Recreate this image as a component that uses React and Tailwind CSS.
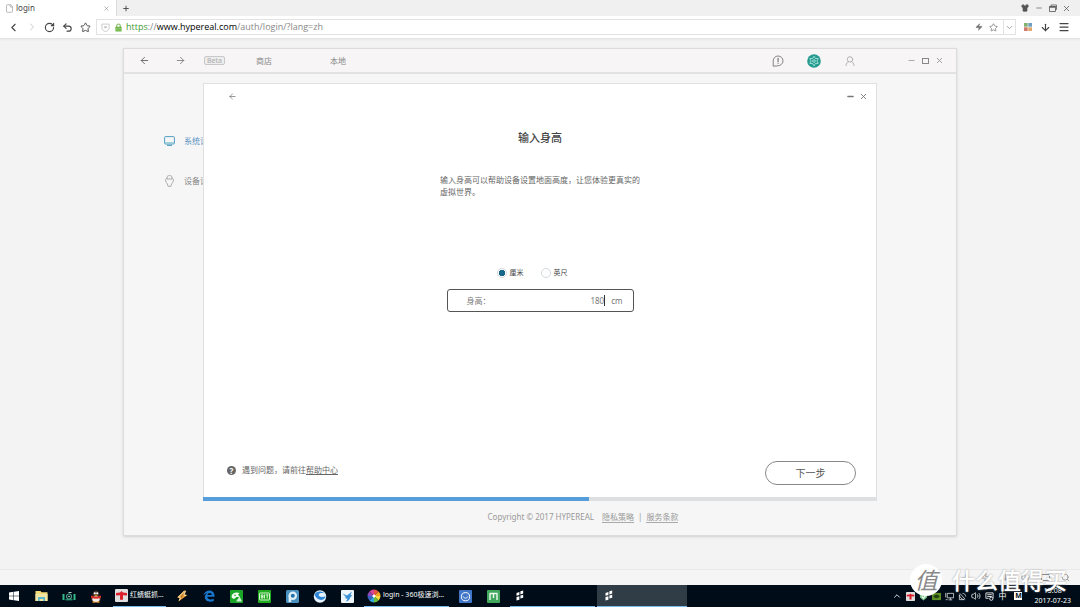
import { useState } from 'react';
import {
    ArrowDown,
    ArrowLeft,
    ArrowRight,
    ChevronDown,
    ChevronLeft,
    ChevronRight,
    ChevronUp,
    File,
    Menu,
    Minus,
    Plus,
    RotateCw,
    Search,
    Shirt,
    Star,
    Undo2,
    Volume2,
    X,
    Zap,
} from 'lucide-react';

const HEIGHT_PROGRESS = 57.2;

function IconButton({ label, className = '', children }) {
    return (
        <button type="button" aria-label={label} className={`flex shrink-0 items-center justify-center ${className}`}>
            {children}
        </button>
    );
}

/* ---------- Browser ---------- */

function RestoreIcon() {
    return (
        <svg viewBox="0 0 8 8" className="size-2" fill="none" stroke="#555" strokeWidth="0.8">
            <path d="M2 2V1h5.5v4.5h-1" />
            <path d="M0.5 2.5h6v5h-6z" />
            <path d="M0.5 3h6" strokeWidth="1.4" />
        </svg>
    );
}

function TabStrip() {
    return (
        <div className="flex h-4 items-center bg-[#f0f0f0] text-[#555]">
            <div className="flex h-4 w-[117px] items-center border-r border-[#dcdcdc] bg-white pr-[6px] pl-[5px]">
                <File className="size-[9px] text-[#999]" strokeWidth={1.8} />
                <span className="ml-[2px] flex-1 text-[8px] leading-4 text-[#444]">login</span>
                <IconButton label="关闭标签" className="size-2">
                    <X className="size-[7px] text-[#888]" />
                </IconButton>
            </div>
            <IconButton label="新标签" className="ml-[5px] size-2">
                <Plus className="size-[9px]" strokeWidth={3} />
            </IconButton>
            <div className="ml-auto flex items-center gap-[5px] pr-[9px]">
                <IconButton label="皮肤" className="size-[9px]">
                    <Shirt className="size-2 fill-[#555]" />
                </IconButton>
                <IconButton label="最小化" className="size-[9px]">
                    <Minus className="size-2" />
                </IconButton>
                <IconButton label="还原" className="size-[9px]">
                    <RestoreIcon />
                </IconButton>
                <IconButton label="关闭" className="size-[9px]">
                    <X className="size-[9px]" />
                </IconButton>
            </div>
        </div>
    );
}

function AddressBar() {
    return (
        <div className="relative flex h-4 flex-1 items-center border border-[#e2e2e2] bg-white pl-1">
            <svg viewBox="0 0 10 10" className="size-[9px]" fill="none" stroke="#bbb" strokeWidth="0.8">
                <path d="M1 1.2h8v4.3C9 7.6 7.2 8.8 5 9.7 2.8 8.8 1 7.6 1 5.5z" />
                <path d="M3.6 4.2 5 5.8l1.4-1.6z" fill="#bbb" />
            </svg>
            <svg viewBox="0 0 8 10" className="ml-[5px] h-[9px] w-[7px]">
                <path d="M2 5V3a2 2 0 0 1 4 0v2" fill="none" stroke="#7ab65a" strokeWidth="1.2" />
                <rect x="0.5" y="4.2" width="7" height="5.3" rx="0.6" fill="#6db545" />
                <path d="M1 6h6M1 7.8h6" stroke="#a8d68c" strokeWidth="0.6" />
            </svg>
            <p className="ml-1 font-['Open_Sans',sans-serif] text-[9px] leading-4 whitespace-nowrap text-[#888]">
                <span className="text-[#3f9a35]">https</span>://<span className="font-medium text-black">www.hypereal.com</span>
                /auth/login/?lang=zh
            </p>
            <input type="text" aria-label="地址" className="absolute inset-0 bg-transparent outline-none" />
            <div className="relative ml-auto flex h-full items-center text-[#777]">
                <Zap className="mr-[6px] size-2 fill-[#777]" strokeWidth={1} />
                <IconButton label="收藏此页" className="mr-[5px] size-[9px]">
                    <Star className="size-[9px]" />
                </IconButton>
                <IconButton label="展开" className="h-full w-3 border-l border-[#e2e2e2]">
                    <ChevronDown className="size-[9px]" strokeWidth={1.8} />
                </IconButton>
            </div>
        </div>
    );
}

function Toolbar() {
    return (
        <div className="flex h-[23px] items-center border-b border-[#e3e3e3] bg-white pr-3 pl-2 text-[#444] shadow-xs">
            <div className="flex w-[88px] items-center gap-[7px]">
                <IconButton label="后退" className="size-[11px]">
                    <ChevronLeft className="size-[13px] shrink-0" />
                </IconButton>
                <IconButton label="前进" className="size-[11px]">
                    <ChevronRight className="size-[12px] shrink-0 text-[#ccc]" />
                </IconButton>
                <IconButton label="刷新" className="size-[11px]">
                    <RotateCw className="size-[11px]" strokeWidth={2.5} />
                </IconButton>
                <IconButton label="撤销" className="size-[11px]">
                    <Undo2 className="size-[11px]" strokeWidth={2.5} />
                </IconButton>
                <IconButton label="收藏" className="size-[11px]">
                    <Star className="size-[11px]" />
                </IconButton>
            </div>
            <AddressBar />
            <div className="ml-[7px] flex items-center gap-[9px]">
                <IconButton label="应用" className="size-[9px]">
                    <svg viewBox="0 0 8 8" className="size-2">
                        <path d="M0 0h3.7v3.7H0z" fill="#84b070" />
                        <path d="M4.3 0H8v3.7H4.3z" fill="#6f9fbe" />
                        <path d="M0 4.3h3.7V8H0z" fill="#cf7a6b" />
                        <path d="M4.3 4.3H8V8H4.3z" fill="#dfa86d" />
                    </svg>
                </IconButton>
                <IconButton label="下载" className="size-[9px]">
                    <ArrowDown className="size-[11px] shrink-0" strokeWidth={2.5} />
                </IconButton>
                <IconButton label="菜单" className="size-[9px]">
                    <Menu className="size-3 shrink-0" strokeWidth={2.5} />
                </IconButton>
            </div>
        </div>
    );
}

/* ---------- Client window ---------- */

function ChatIcon() {
    return (
        <svg viewBox="0 0 12 12" className="size-3" fill="none" stroke="#777" strokeWidth="0.9" strokeLinecap="round">
            <path d="M1.2 10.8V6A4.9 4.9 0 1 1 6.1 10.8z" strokeLinejoin="round" />
            <path d="M6.1 3.4v3" strokeWidth="1.2" />
            <path d="M6.1 8.1v.1" strokeWidth="1.2" />
        </svg>
    );
}

function GearIcon() {
    return (
        <svg viewBox="0 0 14 14" className="size-[14px]" fill="none" stroke="#b9ebe4" strokeWidth="0.8">
            <circle cx="7" cy="7" r="6.8" fill="#269b8f" stroke="none" />
            <path
                d="M7 2.2 8.4 4.5 11.2 4.6 9.9 7 11.2 9.4 8.4 9.5 7 11.8 5.6 9.5 2.8 9.4 4.1 7 2.8 4.6 5.6 4.5z"
                strokeLinejoin="round"
            />
            <circle cx="7" cy="7" r="1.3" />
        </svg>
    );
}

function UserIcon() {
    return (
        <svg viewBox="0 0 10 10" className="size-[10px]" fill="none" stroke="#aaa" strokeWidth="0.9" strokeLinecap="round">
            <circle cx="5" cy="3.4" r="2.7" />
            <path d="M1 9.5c0-2 1.2-3.3 2.5-3.9M9 9.5c0-2-1.2-3.3-2.5-3.9" />
        </svg>
    );
}

function MonitorIcon() {
    return (
        <svg viewBox="0 0 11 10" className="h-[10px] w-[11px]" fill="none" stroke="#3e95bd" strokeWidth="0.9">
            <rect x="0.6" y="0.6" width="9.8" height="7.4" rx="0.9" />
            <path d="M1 6.7h9" stroke="#7cc4cf" />
            <path d="M3 9.3h5" strokeWidth="1.1" />
        </svg>
    );
}

function DeviceIcon() {
    return (
        <svg viewBox="0 0 10 12" className="h-3 w-[11px]" fill="none" stroke="#999" strokeWidth="0.8" strokeLinejoin="round">
            <path d="M2.6 4V2C2.6 1 3.6.6 5 .6s2.4.4 2.4 1.4v2" />
            <path d="M2.6 3C1.2 3.6.9 4.6 1.2 6c.3 1.3.9 2 1.6 2.8l.8 2.5h2.8l.8-2.5C7.900 8 8.500 7.300 8.800 6c.3-1.400 0-2.400-1.400-3" />
            <path d="M2.6 4h4.8" />
        </svg>
    );
}

function ClientHeader() {
    return (
        <header className="flex h-[25px] items-center border-b-2 border-[#e2e2e2] bg-[#f7f5f6] pr-3 pl-[15px] text-[8px] text-[#888]">
            <IconButton label="后退" className="size-[11px]">
                <ArrowLeft className="size-[11px] text-[#555]" strokeWidth={1.8} />
            </IconButton>
            <IconButton label="前进" className="ml-[25px] size-[11px]">
                <ArrowRight className="size-[11px] text-[#777]" strokeWidth={1.8} />
            </IconButton>
            <span className="ml-[18px] w-[21px] rounded-xs border border-[#c8c8c8] bg-[#eeeeee] text-center text-[7px] leading-[7px] text-[#aaa]">
                Beta
            </span>
            <nav className="ml-[31px] flex">
                <a href="#store" className="w-[74px]">商店</a>
                <a href="#local">本地</a>
            </nav>
            <div className="ml-auto flex items-center gap-[22px]">
                <IconButton label="反馈" className="size-[14px]">
                    <ChatIcon />
                </IconButton>
                <IconButton label="设置" className="size-[14px]">
                    <GearIcon />
                </IconButton>
                <IconButton label="账户" className="size-[14px]">
                    <UserIcon />
                </IconButton>
            </div>
            <div className="ml-[50px] flex items-center gap-[5px]">
                <IconButton label="最小化" className="size-[9px]">
                    <Minus className="size-[9px]" strokeWidth={1.8} />
                </IconButton>
                <IconButton label="最大化" className="size-[9px]">
                    <span className="h-[6px] w-[7px] border border-[#888]" />
                </IconButton>
                <IconButton label="关闭" className="size-[9px]">
                    <X className="size-[9px]" />
                </IconButton>
            </div>
        </header>
    );
}

function UnitRadio({ value, label, unit, onChange }) {
    return (
        <label className="flex items-center gap-[3px] text-[7px] leading-[10px] text-[#444]">
            <input
                type="radio"
                name="unit"
                value={value}
                checked={unit === value}
                onChange={() => onChange(value)}
                className="size-[10px] appearance-none rounded-full border border-[#d3dade] bg-white checked:bg-[radial-gradient(circle,#17688a_0_3px,#fff_3px)]"
            />
            {label}
        </label>
    );
}

function HeightDialog() {
    const [unit, setUnit] = useState('cm');
    const [height, setHeight] = useState('180');

    return (
        <section className="min-w-0 flex-1">
            <div className="border border-b-0 border-[#e0e0e0] bg-white pb-3">
                <div className="flex h-6 items-center pr-2 pl-6 text-[#777]">
                    <IconButton label="返回" className="size-[9px]">
                        <ArrowLeft className="size-[9px]" />
                    </IconButton>
                    <IconButton label="最小化" className="ml-auto size-[9px]">
                        <Minus className="size-[9px]" strokeWidth={3.5} />
                    </IconButton>
                    <IconButton label="关闭" className="ml-1 size-[9px]">
                        <X className="size-[9px]" strokeWidth={2.5} />
                    </IconButton>
                </div>

                <h1 className="mt-[22px] text-center text-[11px] leading-4 font-medium text-[#444]">输入身高</h1>
                <p className="mx-auto mt-7 w-[200px] text-[8px] leading-3 text-[#666]">
                    输入身高可以帮助设备设置地面高度，让您体验更真实的虚拟世界。
                </p>

                <div className="mt-[70px] flex justify-center gap-[17px] pr-4">
                    <UnitRadio value="cm" label="厘米" unit={unit} onChange={setUnit} />
                    <UnitRadio value="ft" label="英尺" unit={unit} onChange={setUnit} />
                </div>

                <div className="mx-auto mt-[11px] flex h-[23px] w-[187px] items-center rounded-[3px] border border-[#555] pr-[10px] pl-[19px] text-[8px] text-[#777]">
                    <label htmlFor="height">身高：</label>
                    <input
                        id="height"
                        type="text"
                        value={height}
                        onChange={(e) => setHeight(e.target.value)}
                        className="w-0 min-w-0 flex-1 bg-transparent text-right outline-none"
                    />
                    <span className="h-[11px] w-px bg-[#333]" />
                    <span className="ml-[6px]">cm</span>
                </div>

                <div className="mt-[149px] flex h-6 items-center pr-[20px] pl-[23px]">
                    <div className="mb-[6px] flex items-center gap-[6px] text-[8px] leading-3 text-[#666]">
                        <span className="flex size-[9px] items-center justify-center rounded-full bg-[#666] leading-[9px] font-bold text-white">
                            ?
                        </span>
                        <p>
                            遇到问题，请前往
                            <a href="#help" className="underline underline-offset-1">帮助中心</a>
                        </p>
                    </div>
                    <button type="button" className="ml-auto h-6 w-[91px] rounded-full border border-[#888] text-[10px] leading-5 text-[#555]">
                        下一步
                    </button>
                </div>
            </div>
            <div className="h-1 bg-[#dddfe1]">
                <div className="h-1 bg-[#559edb]" style={{ width: `${HEIGHT_PROGRESS}%` }} />
            </div>
        </section>
    );
}

function ClientWindow() {
    return (
        <div className="mx-[123px] border border-[#dcdcdc] bg-[#f6f6f6] shadow-sm">
            <ClientHeader />
            <div className="flex pt-[9px] pr-[79px]">
                <aside className="w-[79px] shrink-0 overflow-hidden pt-13 pl-10 text-[8px] whitespace-nowrap">
                    <a href="#system" className="flex h-3 items-center gap-[9px] text-[#5a92c4]">
                        <span className="shrink-0"><MonitorIcon /></span>
                        系统设置
                    </a>
                    <a href="#device" className="mt-7 flex h-3 items-center gap-[9px] text-[#888]">
                        <span className="shrink-0"><DeviceIcon /></span>
                        设备设置
                    </a>
                </aside>
                <HeightDialog />
            </div>
            <footer className="flex items-center justify-center pt-[10px] pb-3 pl-[86px] text-[8px] leading-3 text-[#999]">
                <span className="mr-2">Copyright © 2017 HYPEREAL</span>
                <a href="#privacy" className="border-b border-[#aaa] leading-[10px]">隐私策略</a>
                <span className="mx-1">|</span>
                <a href="#terms" className="border-b border-[#aaa] leading-[10px]">服务条款</a>
            </footer>
        </div>
    );
}

/* ---------- Windows taskbar ---------- */

function WindowsLogo() {
    return (
        <svg viewBox="0 0 10 10" className="size-[10px]" fill="#fff">
            <path d="M0 1.4 4.5.8v3.900H0zM5 .7 10 0v4.700H5zM0 5.200h4.500v4L0 8.600zM5 5.200h5V10l-5-.7z" />
        </svg>
    );
}

function FolderLogo() {
    return (
        <svg viewBox="0 0 13 12" className="h-3 w-[13px]">
            <path d="M.5 1h5l1 1.2h6V11H.5z" fill="#f5db78" />
            <path d="M.5 4h12v7H.5z" fill="#f3e6a5" />
            <path d="M3 11V7h7v4H8.300V9H4.700v2z" fill="#5fb9c9" />
        </svg>
    );
}

function CameraLogo() {
    return (
        <svg viewBox="0 0 14 10" className="h-[10px] w-[14px]" fill="none">
            <path d="M1.5 3v6M12.5 3v6" stroke="#32b98c" strokeWidth="2" />
            <path d="M3.5 8.8h7" stroke="#32b98c" strokeWidth="1" />
            <circle cx="7" cy="5.5" r="2.5" stroke="#4a9d88" strokeWidth="1.2" />
            <path d="M6.5 1.5h3" stroke="#b8d5cd" strokeWidth="1" />
            <circle cx="7" cy="5.5" r=".8" fill="#d7eee8" />
        </svg>
    );
}

function PenguinLogo() {
    return (
        <svg viewBox="0 0 12 13" className="h-[13px] w-3">
            <ellipse cx="6" cy="5" rx="3.6" ry="4.6" fill="#3d2f2b" />
            <ellipse cx="6" cy="9" rx="4.8" ry="3.5" fill="#5a3329" />
            <ellipse cx="6" cy="9.3" rx="3.6" ry="3" fill="#f2ede8" />
            <path d="M1 5.5c3.3 1.8 6.7 1.8 10 0v2.2c-3.3 1.4-6.7 1.4-10 0z" fill="#e02b22" />
            <circle cx="4.8" cy="3.3" r="1.1" fill="#fff" />
            <circle cx="7.2" cy="3.3" r="1.1" fill="#fff" />
            <path d="M3.8 4.8h4.400L6 6z" fill="#f3a522" />
            <path d="M2.5 12.2h2.800M6.700 12.200h2.800" stroke="#ee9b23" strokeWidth="1.3" />
        </svg>
    );
}

function DragonflyLogo({ className }) {
    return (
        <svg viewBox="0 0 13 13" className={className}>
            <rect width="13" height="13" rx="1" fill="#dedede" />
            <path d="M1 4 5 3.6 6.5 2 8 3.6 12 4v2.400L8 6.200v4.600H5V6.200L1 6.400z" fill="#dc1f2c" />
        </svg>
    );
}

function WinampLogo() {
    return (
        <svg viewBox="0 0 12 12" className="size-3">
            <path d="M8.5.5 1 7.5 3.5 8 2.5 11.5 11.5 5 8.5 4.3 10 .8z" fill="#e89a30" />
            <path d="M8.5.8 2.5 7l2.300.5-1.500 3M9.800 1.200 7.500 5l2.500.5" fill="none" stroke="#f8ebc8" strokeWidth=".9" />
            <path d="m7.5 3.8-3 4.2" stroke="#8a5a20" strokeWidth=".7" />
        </svg>
    );
}

function EdgeLogo() {
    return (
        <svg viewBox="0 0 12 12" className="size-3">
            <path
                d="M.5 5.500C1 2.500 3.200.4 6.200.4c3.300 0 5.300 2.300 5.300 5.200v1.200H4.300c.1 1.800 1.500 2.700 3.400 2.700 1.200 0 2.200-.3 3.100-.8v2.300c-1 .5-2.200.7-3.500.7-3.300 0-5.400-1.900-5.400-4.700 0-1.900 1-3.300 2.600-4.100C2.800 3.200 1.500 4 .5 5.500zM4.400 4.900h4.400c0-1.200-.7-2-2-2-1.400 0-2.200.8-2.400 2z"
                fill="#1878d2"
            />
        </svg>
    );
}

function IqiyiLogo() {
    return (
        <svg viewBox="0 0 13 13" className="size-[13px]">
            <rect width="13" height="13" rx="1" fill="#18a528" />
            <path d="M1.5 6.5C2 3 6 1.500 9.500 3L8 4.800l2 2.200H6.500L4 9C2.500 8.500 1.500 7.800 1.500 6.500z" fill="#f0fbf0" />
            <path d="M6 11.5 9.5 6.500l2.500 5z" fill="#d5f0d6" />
            <circle cx="5" cy="5.2" r=".8" fill="#18a528" />
        </svg>
    );
}

function BitLogo() {
    return (
        <svg viewBox="0 0 13 13" className="size-[13px]" fill="none" stroke="#e8fbe4" strokeWidth=".9">
            <rect width="13" height="13" rx="1" fill="#20ac1e" stroke="none" />
            <rect x="1.5" y="3" width="10" height="7" rx=".8" />
            <path d="M3.3 4.9h1.700v3.200H3.300zM3.300 6.500h1.700M6.500 4.500v4M7.800 4.900h2.700M9.200 4.900v3.600" />
        </svg>
    );
}

function PpLogo() {
    return (
        <svg viewBox="0 0 13 13" className="size-[13px]">
            <rect width="13" height="13" rx="1.5" fill="#4a91c0" />
            <circle cx="6.8" cy="5.7" r="4.2" fill="#e2f0f8" />
            <path d="M2.6 5h2.600v7H2.600z" fill="#e2f0f8" />
            <circle cx="6.8" cy="5.7" r="2" fill="#2471aa" />
        </svg>
    );
}

function SwirlLogo() {
    return (
        <svg viewBox="0 0 14 13" className="h-[13px] w-[14px]">
            <circle cx="7" cy="6.5" r="6.2" fill="#e6f2fb" />
            <path d="M1.5 4.5C3 1.200 8.500.5 11.500 3.500 9 2.800 6.500 3 5.800 4.500c-.6 2.200 3.200 3.200 6.700 1.700C12 10 7.500 11 4.500 8.800 3 7.700 2 6 1.500 4.500z" fill="#2f86d6" />
        </svg>
    );
}

function BirdLogo() {
    return (
        <svg viewBox="0 0 13 13" className="size-[13px]">
            <rect width="13" height="13" rx="1" fill="#edf5fb" />
            <path d="M1.5 3.5 6 5.500 11 1.500 9.500 5l2 .5-2.200 1.700c-.3 2.300-1.800 3.600-4.300 4.300l1.500-2.700-3-.8 1.500-.8z" fill="#3a90d6" />
        </svg>
    );
}

function ColorWheel() {
    const colors = ['#e9503d', '#f5a623', '#f4dc3d', '#6cbf3e', '#2fa7d8', '#3a62c4', '#8a49b8', '#d64596'];
    return (
        <svg viewBox="-7 -7 14 14" className="size-[14px] shrink-0">
            {colors.map((c, i) => (
                <path key={c} d="M0 0V-6.5A6.5 6.5 0 0 1 4.6-4.6z" fill={c} transform={`rotate(${i * 45})`} />
            ))}
            <circle r="1.6" fill="#fff" />
        </svg>
    );
}

function SmileLogo() {
    return (
        <svg viewBox="0 0 13 13" className="size-[13px]" fill="none" stroke="#fff">
            <rect width="13" height="13" rx="1" fill="#4276c8" stroke="none" />
            <circle cx="6.5" cy="6.7" r="4.1" strokeWidth="1" />
            <path d="M4.3 6.5c.8 2.3 3.6 2.3 4.4 0" strokeWidth=".9" />
        </svg>
    );
}

function MLogo() {
    return (
        <svg viewBox="0 0 13 13" className="size-[13px]" fill="none">
            <rect width="13" height="13" rx="1" fill="#41a75d" />
            <path d="M3 10V3.5H10V10M6.5 3.5V8" stroke="#eefaf0" strokeWidth="1.4" strokeLinejoin="round" />
        </svg>
    );
}

function HyperealLogo() {
    return (
        <svg viewBox="0 0 8 11" className="h-[11px] w-2" fill="#fff">
            <path d="M.5 3 3.400 2V5L.5 5.800zM4.400 1.200 7.200.4V3.600L4.400 4.400zM.5 7 3.400 6.200v3.600L.5 10.600zM4.400 5.600 7.200 4.800V7.800L4.400 8.600z" />
        </svg>
    );
}

const pinned = [
    { name: '开始', Logo: WindowsLogo },
    { name: '文件资源管理器', Logo: FolderLogo },
    { name: '相机', Logo: CameraLogo },
    { name: 'QQ', Logo: PenguinLogo },
];

const apps = [
    { name: 'Winamp', Logo: WinampLogo },
    { name: 'Edge', Logo: EdgeLogo },
    { name: '爱奇艺', Logo: IqiyiLogo },
    { name: 'BIT', Logo: BitLogo },
    { name: 'PP', Logo: PpLogo },
    { name: '浏览器', Logo: SwirlLogo },
    { name: '迅雷', Logo: BirdLogo },
];

const tools = [
    { name: '助手', Logo: SmileLogo },
    { name: '魔秀', Logo: MLogo },
];

function AppGroup({ items, className }) {
    return (
        <div className={`grid h-full shrink-0 ${className}`}>
            {items.map(({ name, Logo }) => (
                <IconButton key={name} label={name}>
                    <Logo />
                </IconButton>
            ))}
        </div>
    );
}

function Tray() {
    return (
        <div className="ml-auto flex h-full shrink-0 items-center text-white">
            <div className="flex items-center gap-1">
                <ChevronUp className="size-[10px]" />
                <DragonflyLogo className="size-[9px]" />
                <svg viewBox="0 0 10 10" className="size-[9px]">
                    <path d="M1 1h8v5L5 9.5 1 6z" fill="#7cc48d" />
                    <path d="M3 5l2 2 3-4" fill="none" stroke="#fff" strokeWidth="1.2" />
                </svg>
                <svg viewBox="0 0 10 10" className="size-[9px]">
                    <path d="M0 1h10v8H0z" fill="#5d8f22" />
                    <path d="M1.5 5c2-3 5-3 7 0-2 2.500-5 2.500-7 0z" fill="#213f12" />
                </svg>
                <svg viewBox="0 0 10 10" className="size-[9px]" fill="none" stroke="#ddd" strokeWidth=".9">
                    <path d="M2.5 1.5h7v5h-7zM6 6.500v2M4 8.700h4M.8 1v5M.8 8.500h2" />
                </svg>
                <svg viewBox="0 0 10 10" className="size-[9px]" fill="none" stroke="#ddd" strokeWidth=".9">
                    <path d="M2 1.5 8 8M1.500 3v5.500H7C4 8 2 6 1.500 3zM5 1.500c2 0 3.500 1.500 3.500 3.500" />
                </svg>
                <Volume2 className="size-[10px]" strokeWidth={1.8} />
                <svg viewBox="0 0 10 10" className="size-[9px]" fill="none" stroke="#eee" strokeWidth="1">
                    <path d="M1 1h8v6M1 1v6h3M2.500 3h5M2.500 5h5" />
                    <circle cx="7" cy="7.5" r="1.8" />
                </svg>
                <span className="text-[8px] leading-[10px]">中</span>
            </div>
            <span className="ml-2 flex size-2 items-center justify-center bg-white text-[7px] leading-2 font-bold text-[#000d18]">M</span>
            <time className="mr-[9px] ml-3 text-center text-[7px] leading-[10px]">
                15:08
                <br />
                2017-07-23
            </time>
        </div>
    );
}

function Taskbar() {
    return (
        <div className="flex h-[22px] items-center bg-[#000d18] text-[7px] text-white">
            <AppGroup items={pinned} className="w-[110px] grid-cols-4" />
            <button type="button" className="ml-[3px] flex h-full w-[53px] shrink-0 items-center gap-[2px] border-b border-[#76b9ed] pl-[2px] whitespace-nowrap">
                <DragonflyLogo className="size-[13px] shrink-0" />
                <span>红蜻蜓抓…</span>
            </button>
            <AppGroup items={apps} className="ml-[2px] w-[193px] grid-cols-7" />
            <button type="button" className="ml-[3px] flex h-full w-[85px] shrink-0 items-center gap-[2px] border-b border-[#76b9ed] pl-[3px] whitespace-nowrap">
                <ColorWheel />
                <span>login - 360极速浏…</span>
            </button>
            <AppGroup items={tools} className="ml-[3px] w-[55px] grid-cols-2" />
            <button type="button" aria-label="Hypereal" className="ml-[3px] flex h-full w-[85px] shrink-0 items-center border-b border-[#76b9ed] pl-[6px]">
                <HyperealLogo />
            </button>
            <button type="button" aria-label="Hypereal" className="ml-[2px] flex h-full w-[90px] shrink-0 items-center border-b border-[#76b9ed] bg-[#303d47] pl-2">
                <HyperealLogo />
            </button>
            <Tray />
        </div>
    );
}

function StatusBar() {
    return (
        <div className="flex h-4 items-center justify-end gap-[11px] border-t border-[#e9e9e9] bg-[#f5f5f5] pr-[10px] text-[#888]">
            <Plus className="size-[9px]" />
            <Zap className="size-[9px]" />
            <ArrowDown className="size-[9px]" />
            <Volume2 className="size-[9px]" />
            <span className="h-[7px] w-[9px] border border-[#888]" />
            <Search className="size-[9px]" />
        </div>
    );
}

function Watermark() {
    return (
        <div className="pointer-events-none absolute right-[13px] bottom-[11px] flex items-center gap-[10px] text-white">
            <span className="flex size-8 items-center justify-center rounded-full bg-white text-[23px] leading-8 text-[#888] italic">
                值
            </span>
            <span className="text-[23px] leading-8 font-medium [text-shadow:0_0_2px_#999]">什么值得买</span>
        </div>
    );
}

export default function App() {
    return (
        <div className="relative flex min-h-screen flex-col bg-[#f3f3f3] font-['Noto_Sans','Noto_Sans_CJK_SC',sans-serif]">
            <TabStrip />
            <Toolbar />
            <main className="flex-1 pt-[9px]">
                <ClientWindow />
            </main>
            <StatusBar />
            <Taskbar />
            <Watermark />
        </div>
    );
}
